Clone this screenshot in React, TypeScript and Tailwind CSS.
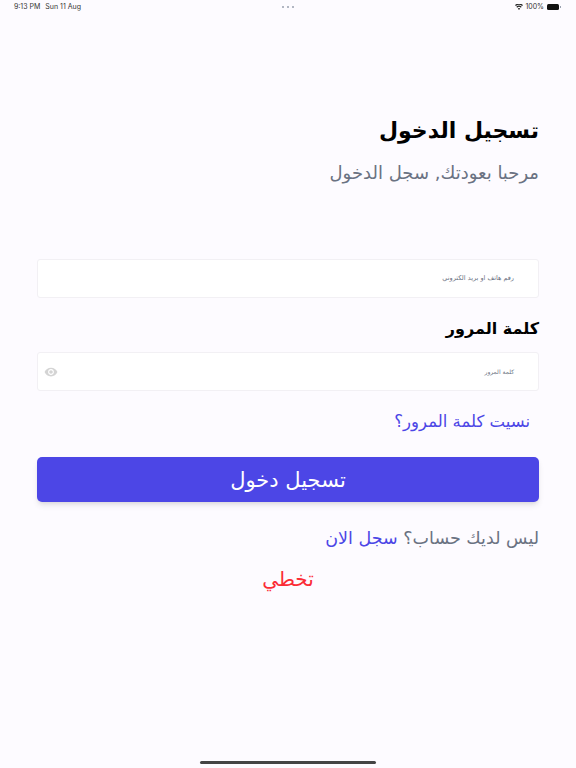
const arabic = "font-['DejaVu_Sans',sans-serif]";

const LoginPage = () => {
  return (
    <div className="relative h-[768px] w-[576px] overflow-hidden bg-[#fdfbff] font-['Inter',sans-serif]">
      {/* Status bar */}
      <div className="grid h-[14px] grid-cols-3 items-center px-[14px] text-[7px] text-[#333333]">
        <div className="flex gap-[5px]">
          <span>9:13 PM</span>
          <span>Sun 11 Aug</span>
        </div>
        <div className="flex justify-center gap-[2.5px]">
          <span className="h-[2.5px] w-[2.5px] rounded-full bg-gray-400" />
          <span className="h-[2.5px] w-[2.5px] rounded-full bg-gray-400" />
          <span className="h-[2.5px] w-[2.5px] rounded-full bg-gray-400" />
        </div>
        <div className="flex items-center justify-end gap-[2px] pr-[1px]">
          <svg viewBox="0 0 24 18" className="h-[6px] w-[8px]" fill="#222222">
            <path d="M12 18 8.4 13.5a5.6 5.6 0 0 1 7.2 0L12 18zM6.4 11 4 8a12.4 12.4 0 0 1 16 0l-2.4 3a8.6 8.6 0 0 0-11.2 0zM2.6 6.2 0 3.2a18.6 18.6 0 0 1 24 0l-2.6 3a14.8 14.8 0 0 0-18.800 0z" />
          </svg>
          <span>100%</span>
          <span className="ml-[1px] h-[6px] w-[12px] rounded-[1.5px] bg-[#111111]" />
          <span className="-ml-[1px] h-[2px] w-[1px] bg-gray-400" />
        </div>
      </div>

      {/* Form */}
      <div dir="rtl" className={`flex flex-col px-[37px] ${arabic}`}>
        <h1 className="mt-[101px] h-[32px] text-[22px] leading-[32px] font-bold text-black">تسجيل الدخول</h1>
        <p className="mt-[13px] h-[26px] text-[18px] leading-[26px] text-gray-500">مرحبا بعودتك, سجل الدخول</p>

        <div className="mt-[73px] flex h-[39px] items-center rounded-[3px] border border-[#f2f0f4] bg-white px-[24px]">
          <span className="text-[6.5px] text-gray-500">رقم هاتف او بريد الكتروني</span>
        </div>

        <h2 className="mt-[18px] h-[26px] text-[16px] leading-[26px] font-bold tracking-[-0.5px] text-black">كلمة المرور</h2>

        <div className="mt-[10px] flex h-[39px] items-center justify-between rounded-[3px] border border-[#f2f0f4] bg-white pr-[24px] pl-[6px]">
          <span className="text-[6px] text-gray-500">كلمة المرور</span>
          <svg viewBox="0 0 24 24" className="h-[14px] w-[14px]" fill="#d4d4d4">
            <path d="M12 4.500C7 4.500 2.730 7.610 1 12c1.730 4.390 6 7.500 11 7.500s9.270-3.110 11-7.500c-1.730-4.390-6-7.500-11-7.500zM12 17c-2.760 0-5-2.240-5-5s2.240-5 5-5 5 2.240 5 5-2.240 5-5 5zm0-8c-1.660 0-3 1.340-3 3s1.340 3 3 3 3-1.340 3-3-1.340-3-3-3z" />
          </svg>
        </div>

        <a className="mt-[18px] h-[26px] pr-[9px] text-[16.5px] leading-[26px] text-[#4c46e6]">نسيت كلمة المرور؟</a>

        <button className="mt-[22px] flex h-[45px] items-center justify-center rounded-[5px] bg-[#4c46e6] pt-[2px] text-[21px] font-medium text-white shadow-md">
          تسجيل دخول
        </button>

        <p className="mt-[23px] h-[26px] text-[17.5px] leading-[26px] text-gray-500">
          ليس لديك حساب؟ <span className="text-[#4c46e6]">سجل الان</span>
        </p>

        <div className="mt-[15px] h-[26px] text-center text-[20px] leading-[26px] text-red-500">تخطي</div>
      </div>

      {/* Home indicator */}
      <div className="absolute bottom-[4px] left-[200px] h-[3px] w-[176px] rounded-full bg-[#444444]" />
    </div>
  );
};

export default LoginPage;
